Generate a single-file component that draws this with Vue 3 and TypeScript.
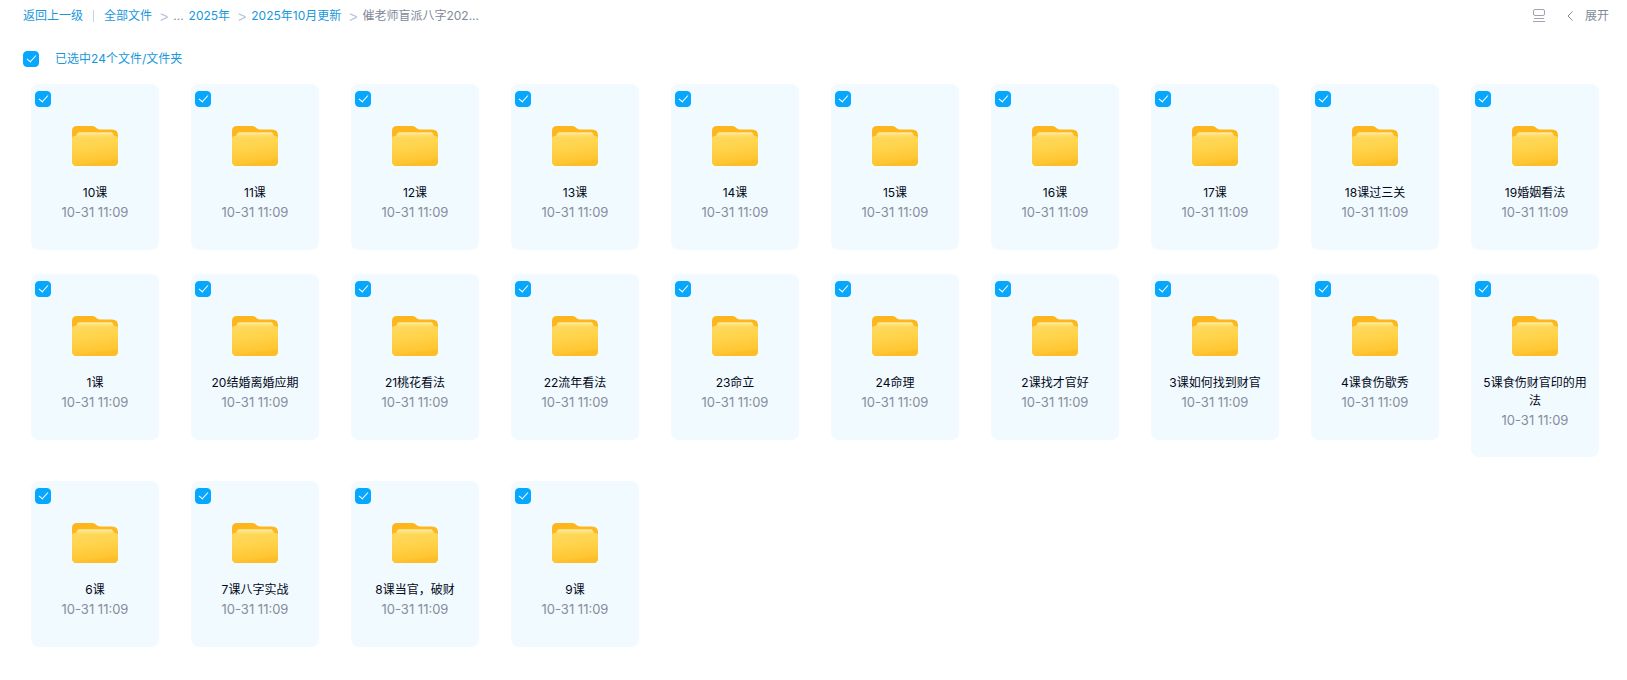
<script setup lang="ts">
import { computed, ref } from 'vue'

interface Folder {
  name: string
  time: string
  checked: boolean
}

const names: string[] = [
  '10课', '11课', '12课', '13课', '14课', '15课', '16课', '17课', '18课过三关', '19婚姻看法',
  '1课', '20结婚离婚应期', '21桃花看法', '22流年看法', '23命立', '24命理', '2课找才官好',
  '3课如何找到财官', '4课食伤歇秀', '5课食伤财官印的用法',
  '6课', '7课八字实战', '8课当官，破财', '9课',
]

const folders = ref<Folder[]>(names.map((name) => ({ name, time: '10-31 11:09', checked: true })))
const selected = computed(() => folders.value.filter((f) => f.checked).length)
const allChecked = computed({
  get: () => selected.value === folders.value.length,
  set: (value: boolean) => folders.value.forEach((f) => (f.checked = value)),
})
</script>

<template>
  <div class="page">
    <svg class="defs" width="0" height="0" aria-hidden="true">
      <defs>
        <linearGradient id="folder-front" x1="0" y1="0" x2="0.2" y2="1">
          <stop offset="0" stop-color="#ffdb62" />
          <stop offset="0.5" stop-color="#ffd34c" />
          <stop offset="0.92" stop-color="#ffc632" />
          <stop offset="1" stop-color="#fdbd26" />
        </linearGradient>
        <linearGradient id="folder-shine" x1="0" y1="0" x2="0" y2="1">
          <stop offset="0" stop-color="#fff0b4" />
          <stop offset="1" stop-color="#ffdc62" stop-opacity="0" />
        </linearGradient>
      </defs>
    </svg>

    <header class="topbar">
      <nav class="crumbs" aria-label="路径">
        <a href="#">返回上一级</a>
        <span class="divider"></span>
        <a href="#">全部文件</a>
        <span class="sep">&gt;</span>
        <span class="dots">...</span>
        <a href="#">2025年</a>
        <span class="sep">&gt;</span>
        <a href="#">2025年10月更新</a>
        <span class="sep">&gt;</span>
        <span class="current">催老师盲派八字202...</span>
      </nav>
      <div class="tools">
        <button type="button" class="tool" aria-label="切换视图">
          <svg width="12" height="14" viewBox="0 0 12 14" fill="none" stroke="#a0a3b2">
            <rect x="0.5" y="0.5" width="11" height="6" rx="1.5" />
            <path d="M1 9.5h10M0 12.5h12" />
          </svg>
        </button>
        <button type="button" class="tool">
          <svg width="6" height="10" viewBox="0 0 6 10" fill="none" stroke="#878c9c">
            <path d="M5.5 0.5L1 5l4.5 4.5" />
          </svg>
          展开
        </button>
      </div>
    </header>

    <label class="summary">
      <input v-model="allChecked" class="check" type="checkbox" />
      已选中{{ selected }}个文件/文件夹
    </label>

    <ul class="grid">
      <li v-for="(folder, i) in folders" :key="folder.name" class="card">
        <input :id="`folder-${i}`" v-model="folder.checked" class="check" type="checkbox" />
        <svg class="folder" width="46" height="40" viewBox="0 0 46 40" aria-hidden="true">
          <path
            d="M0 5Q0 0 5 0H20Q22 0 23.5 1.2L25.5 2.8Q26.5 3.5 28 3.5H40Q46 3.5 46 9.5V35Q46 40 41 40H5Q0 40 0 35Z"
            fill="#fdb71c"
          />
          <path
            d="M0 12Q0 10 2.5 10Q4.3 10 4.8 8.5Q5.3 6.5 7 6.5H39Q40.7 6.5 41.2 8.5Q41.7 10 43.5 10Q46 10 46 12V35Q46 40 41 40H5Q0 40 0 35Z"
            fill="url(#folder-front)"
          />
          <path d="M4.8 8.5Q5.3 6.5 7 6.5H39Q40.7 6.5 41.2 8.5L43 12H3Z" fill="url(#folder-shine)" />
        </svg>
        <label class="name" :for="`folder-${i}`">{{ folder.name }}</label>
        <time class="time">{{ folder.time }}</time>
      </li>
    </ul>
  </div>
</template>

<style>
body {
  margin: 0;
  background: #fff;
}
</style>

<style scoped>
.page {
  font-family: Inter, "Noto Sans CJK SC", sans-serif;
  font-size: 12px;
  line-height: 18px;
  color: #03081a;
}

.defs {
  position: absolute;
}

.topbar {
  display: flex;
  align-items: center;
  justify-content: space-between;
  height: 32px;
  padding: 0 18px 0 23px;
}

.crumbs,
.tools {
  display: flex;
  align-items: center;
}

a {
  color: #1997dc;
  text-decoration: none;
}

.divider {
  width: 1px;
  height: 12px;
  margin: 0 10px;
  background: #c8d2e4;
}

.sep {
  padding-top: 2px;
  margin: 0 5px 0 8px;
  font-family: "Liberation Sans", sans-serif;
  font-size: 14px;
  color: #b4c3e0;
}

.dots {
  margin-right: 5px;
  color: #878c9c;
}

.current {
  color: #818999;
}

.tools {
  gap: 22px;
}

.tool {
  display: flex;
  align-items: center;
  gap: 12px;
  padding: 0;
  border: 0;
  background: none;
  font: inherit;
  color: #818999;
  cursor: pointer;
}

.summary {
  display: flex;
  align-items: center;
  gap: 16px;
  width: fit-content;
  margin: 18px 0 0 23px;
  color: #1997dc;
}

.check {
  flex: none;
  appearance: none;
  width: 16px;
  height: 16px;
  margin: 0;
  border: 1px solid #06a7ff;
  border-radius: 4px;
  background: #fff;
  cursor: pointer;
}

.check:checked {
  background: #06a7ff;
}

.check:checked::before {
  content: "";
  display: block;
  box-sizing: border-box;
  width: 5px;
  height: 9px;
  margin: 1px 0 0 5px;
  border: solid #fff;
  border-width: 0 1px 1px 0;
  transform: rotate(42deg);
}

.grid {
  display: grid;
  grid-template-columns: repeat(auto-fill, 128px);
  align-items: start;
  gap: 24px 32px;
  margin: 0;
  padding: 16px 24px 32px 31px;
  list-style: none;
}

.card {
  display: flex;
  flex-direction: column;
  align-items: center;
  box-sizing: border-box;
  min-height: 166px;
  padding: 7px 4px 28px;
  border-radius: 8px;
  background: #f1fafe;
  text-align: center;
}

.card .check {
  align-self: flex-start;
}

.folder {
  margin: 19px 0 18px;
}

.name {
  padding: 0 8px;
}

.time {
  margin-top: 1px;
  font-size: 13px;
  color: #878c9c;
}
</style>
